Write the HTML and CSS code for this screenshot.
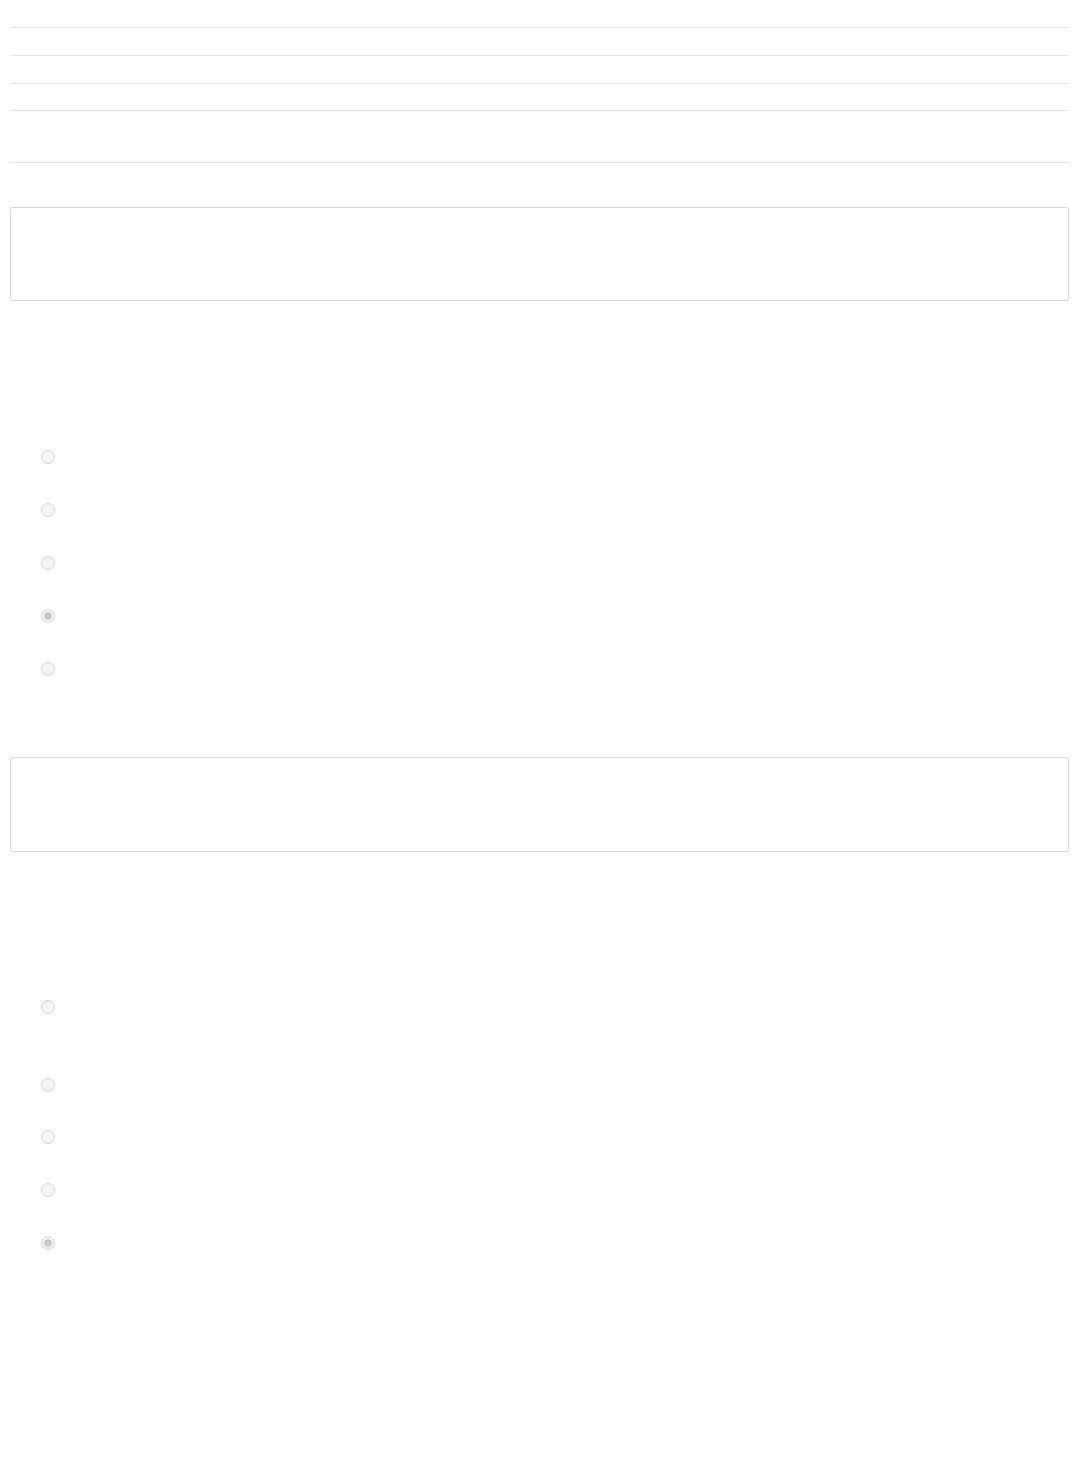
FILE: index.html
```html
<!DOCTYPE html>
<html lang="en">
<head>
  <meta charset="UTF-8">
  <title>Survey Form</title>
  <link rel="stylesheet" href="styles.css">
</head>
<body>

  <div class="rows">
    <div class="row"></div>
    <div class="row"></div>
    <div class="row"></div>
    <div class="row short"></div>
    <div class="row tall"></div>
  </div>

  <div class="answer-box first"></div>

  <div class="options">
    <label class="option"><input type="radio" name="q1" disabled></label>
    <label class="option"><input type="radio" name="q1" disabled></label>
    <label class="option"><input type="radio" name="q1" disabled></label>
    <label class="option"><input type="radio" name="q1" disabled checked></label>
    <label class="option"><input type="radio" name="q1" disabled></label>
  </div>

  <div class="answer-box second"></div>

  <div class="options">
    <label class="option wide"><input type="radio" name="q2" disabled></label>
    <label class="option"><input type="radio" name="q2" disabled></label>
    <label class="option narrow"><input type="radio" name="q2" disabled></label>
    <label class="option"><input type="radio" name="q2" disabled></label>
    <label class="option"><input type="radio" name="q2" disabled checked></label>
  </div>

</body>
</html>
```

FILE: styles.css
```css
body {
  font-family: "Liberation Sans", Arial, sans-serif;
  background: #ffffff;
  margin: 0;
  padding: 0 10px;
}

.rows {
  display: flex;
  flex-direction: column;
}

.row {
  height: 27px;
  border-bottom: 1px solid #e2e2e6;
}

.row.short {
  height: 26px;
}

.row.tall {
  height: 51px;
}

.answer-box {
  height: 92px;
  border: 1px solid #d0d5de;
  border-radius: 2px;
}

.answer-box.first {
  margin-top: 44px;
}

.answer-box.second {
  height: 93px;
  margin-top: 62px;
  border-color: #d6d6d8;
}

.options {
  display: flex;
  flex-direction: column;
  margin-top: 129px;
}

.option {
  height: 53px;
  display: flex;
  align-items: center;
  padding-left: 31px;
}

.option.narrow {
  height: 52px;
}

.option.wide {
  height: 77px;
  align-items: flex-start;
  padding-top: 19px;
  box-sizing: border-box;
}

.option input {
  appearance: none;
  -webkit-appearance: none;
  margin: 0;
  width: 14px;
  height: 14px;
  border: 1px solid #cfcfcf;
  border-radius: 50%;
  background: #f5f5f5;
  box-sizing: border-box;
}

.option input:checked {
  background: radial-gradient(circle, #c6c6c6 0 3.5px, #f5f5f5 4px);
}
```
